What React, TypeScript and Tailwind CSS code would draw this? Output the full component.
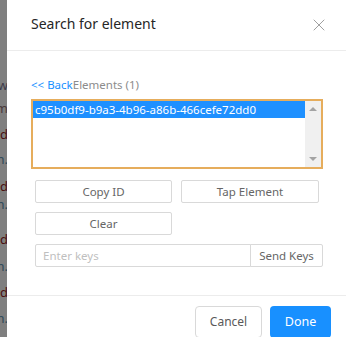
import React from "react";
import { X } from "lucide-react";

const fragments: { text: string; color: string; top: number }[] = [
  { text: "w", color: "text-[#3d3a4a]", top: 79 },
  { text: "m", color: "text-[#4a3a3a]", top: 102 },
  { text: "d", color: "text-[#4a0f0f]", top: 128 },
  { text: "n.", color: "text-[#2e4a5a]", top: 153 },
  { text: "d", color: "text-[#4a0f0f]", top: 180 },
  { text: "n.", color: "text-[#2e4a5a]", top: 198 },
  { text: "d", color: "text-[#4a0f0f]", top: 233 },
  { text: "n.", color: "text-[#2e4a5a]", top: 260 },
  { text: "d", color: "text-[#4a0f0f]", top: 286 },
  { text: "n.", color: "text-[#2e4a5a]", top: 312 },
];

export default function App() {
  return (
    <div
      className="flex h-[337px] w-[346px] overflow-hidden bg-white"
      style={{ fontFamily: '"Noto Sans", "Open Sans", sans-serif' }}
    >
      {/* dimmed page behind the modal */}
      <div className="relative w-[7px] shrink-0 overflow-hidden bg-[#7f7f7f] text-[13px]">
        {fragments.map((f, i) => (
          <span
            key={i}
            className={`absolute -right-[1px] whitespace-nowrap leading-none ${f.color}`}
            style={{ top: f.top }}
          >
            {f.text}
          </span>
        ))}
      </div>

      <div className="flex w-[340px] shrink-0 flex-col bg-white">
        <div className="flex h-[51px] shrink-0 items-center justify-between border-b border-[#ececec] pl-6 pr-[18px]">
          <h1 className="-mt-[3px] text-[14px] text-[#262626]">Search for element</h1>
          <X className="h-5 w-5 text-[#8c8c8c]" strokeWidth={1} />
        </div>

        <div className="flex flex-1 flex-col px-6 pt-[24px]">
          <div className="flex h-[20px] items-center text-[11.5px]">
            <span className="text-[#1890ff]">&lt;&lt; Back</span>
            <span className="text-[#8c8c8c]">Elements (1)</span>
          </div>

          <div className="mt-[4px] flex h-[70px] border-2 border-[#e6ad5c]">
            <div className="flex-1">
              <div className="flex h-[17px] items-center bg-[#1e90ff] pl-[2px] text-[11.5px] text-white">
                c95b0df9-b9a3-4b96-a86b-466cefe72dd0
              </div>
            </div>
            <div className="flex w-[16px] flex-col items-center justify-between bg-[#f0f0f0] py-[6px]">
              <span className="h-0 w-0 border-x-[4px] border-b-[4px] border-x-transparent border-b-[#a3a3a3]" />
              <span className="h-0 w-0 border-x-[4px] border-t-[4px] border-x-transparent border-t-[#a3a3a3]" />
            </div>
          </div>

          <div className="mt-[11px] flex flex-col gap-[9px] px-1 text-[11.5px] text-[#666666]">
            <div className="flex gap-[9px]">
              <button className="h-[23px] w-[137px] rounded-[2px] border border-[#d9d9d9] bg-white">
                Copy ID
              </button>
              <button className="h-[23px] w-[138px] rounded-[2px] border border-[#d9d9d9] bg-white">
                Tap Element
              </button>
            </div>
            <div className="flex">
              <button className="h-[23px] w-[137px] rounded-[2px] border border-[#d9d9d9] bg-white">
                Clear
              </button>
            </div>
            <div className="-mr-1 flex">
              <input
                placeholder="Enter keys"
                className="h-[23px] w-[216px] rounded-l-[2px] border border-[#d9d9d9] px-[7px] text-[11.5px] outline-none placeholder:text-[#bfbfbf]"
              />
              <button className="-ml-px h-[23px] flex-1 rounded-r-[2px] border border-[#d9d9d9] bg-white">
                Send Keys
              </button>
            </div>
          </div>
        </div>

        <div className="flex h-[42px] shrink-0 justify-end gap-[8px] border-t border-[#ececec] pr-4 pt-[10px]">
          <button className="h-[32px] w-[67px] rounded-[4px] border border-[#d9d9d9] bg-white text-[12px] text-[#595959]">
            Cancel
          </button>
          <button className="h-[32px] w-[61px] rounded-[4px] bg-[#1890ff] text-[12.5px] text-white">
            Done
          </button>
        </div>
      </div>
    </div>
  );
}
